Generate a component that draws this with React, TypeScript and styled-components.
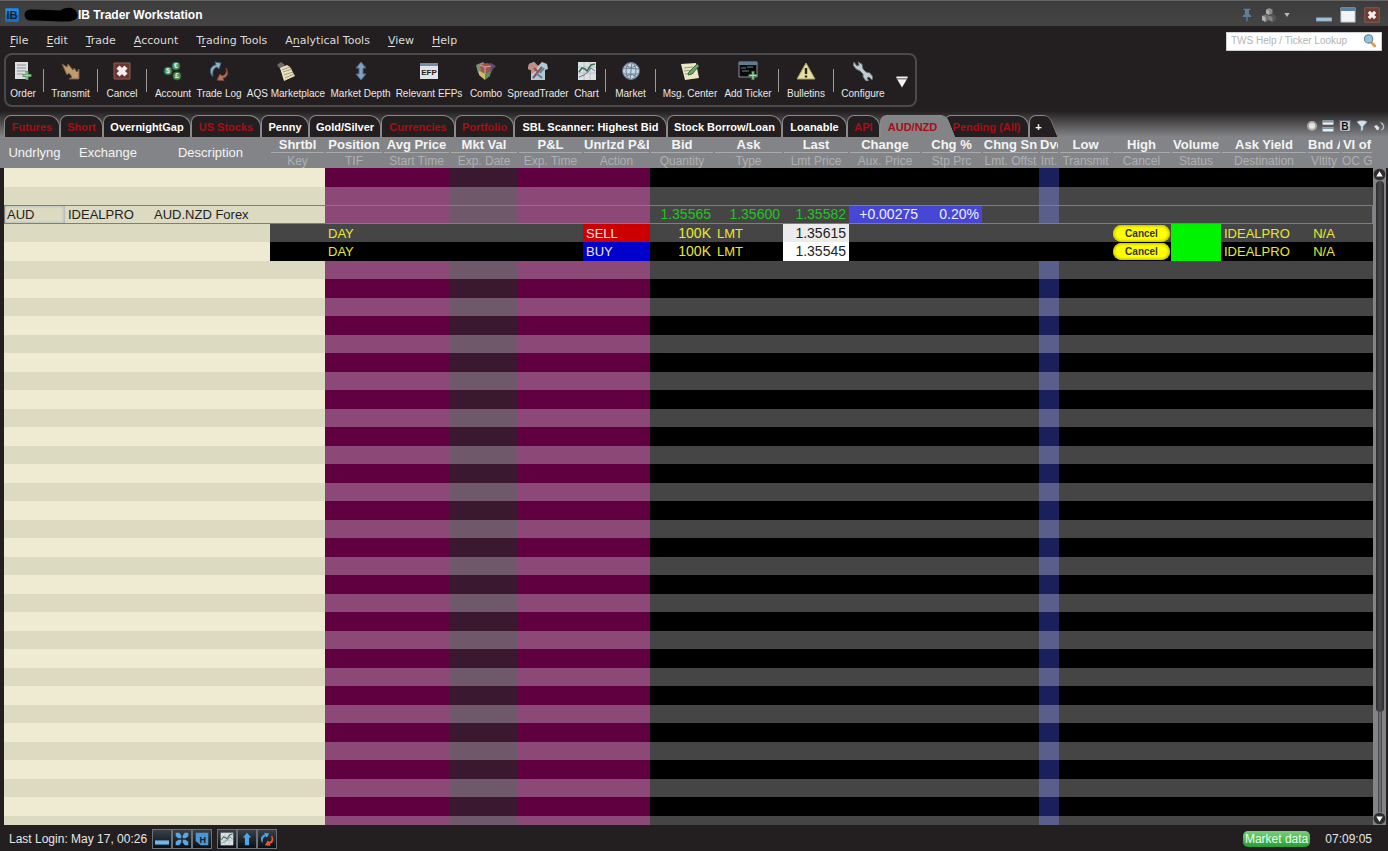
import React from "react";
import styled, { createGlobalStyle, css } from "styled-components";

const GlobalStyle = createGlobalStyle`
  *, *::before, *::after { box-sizing: border-box; }
  body { margin: 0; background: #231f20; font-family: "Liberation Sans", Arial, sans-serif; }
  button { border: 0; padding: 0; background: none; color: inherit; font: inherit; cursor: pointer; }
`;

const Window = styled.div`
  display: flex;
  flex-direction: column;
  height: 100vh;
  overflow: hidden;
  background: #231f20;
  color: #e6e6e6;
`;

/* ---------- title bar ---------- */

const TitleBar = styled.header`
  display: flex;
  align-items: center;
  height: 26px;
  flex: none;
  padding: 2px 8px 0 5px;
  border-top: 1px solid #666;
  background: linear-gradient(#3c3c3c, #454545);
`;

const Title = styled.h1`
  flex: 1;
  margin: 0;
  font-size: 12px;
  line-height: 16px;
  color: #fff;
`;

const WindowControls = styled.div`
  display: flex;
  align-items: center;
  gap: 8px;
`;

const ControlButton = styled.button<{ $gap?: number }>`
  display: flex;
  margin-right: ${(p) => p.$gap ?? 0}px;
`;

/* ---------- menu ---------- */

const MenuRow = styled.div`
  display: flex;
  align-items: center;
  justify-content: space-between;
  flex: none;
  height: 27px;
  padding: 3px 6px 0 10px;
`;

const MenuBar = styled.nav`
  display: flex;
  gap: 18px;
  font: 11px/16px "DejaVu Sans", sans-serif;
  color: #dcdcdc;
`;

const MenuItem = styled.button`
  u { text-underline-offset: 2px; }
`;

const SearchBox = styled.label`
  display: flex;
  align-items: center;
  width: 156px;
  height: 19px;
  padding: 0 4px;
  background: #fff;
  border: 1px solid #cfcfcf;
`;

const SearchInput = styled.input`
  flex: 1;
  min-width: 0;
  border: 0;
  padding: 0;
  outline: 0;
  background: none;
  font: 10px/14px "Liberation Sans", sans-serif;
  color: #444;
  &::placeholder { color: #b4b4b4; opacity: 1; }
`;

/* ---------- toolbar ---------- */

const Toolbar = styled.div`
  display: flex;
  align-self: flex-start;
  flex: none;
  height: 54px;
  margin-left: 4px;
  border: 2px solid #4c494a;
  border-radius: 8px;
`;

const ToolButton = styled.button<{ $width: number }>`
  display: flex;
  flex-direction: column;
  align-items: center;
  gap: 6px;
  width: ${(p) => p.$width}px;
  padding-top: 6px;
  white-space: nowrap;
  font-size: 10px;
  line-height: 14px;
  color: #e8e8e8;
`;

const Separator = styled.div`
  width: 1px;
  height: 23px;
  margin: 14px 3px 0;
  background: #9a9a9a;
`;

const MoreButton = styled.button`
  display: flex;
  align-items: center;
  justify-content: center;
  width: 26px;
  padding-top: 4px;
`;

/* ---------- page tabs ---------- */

const TabRow = styled.div`
  display: flex;
  align-items: flex-end;
  flex: none;
  height: 30px;
  padding: 0 3px 0 4px;
  background: linear-gradient(#231f20 4px, #838487 30px);
`;

const TabList = styled.div`
  display: flex;
  flex: 1;
  height: 22px;
`;

const slanted = css`
  border-right: 0;
  z-index: 1;
  &::after {
    content: "";
    position: absolute;
    top: -1px;
    right: -7px;
    bottom: 0;
    width: 14px;
    background: inherit;
    border-top: 1px solid #8a8a8a;
    border-right: 1px solid #8a8a8a;
    border-top-right-radius: 6px;
    transform: skewX(22deg);
    z-index: -1;
  }
`;

const Tab = styled.button<{ $width: number; $unread?: boolean; $active?: boolean; $slant?: boolean }>`
  position: relative;
  width: ${(p) => p.$width}px;
  border: 1px solid #8a8a8a;
  border-bottom: 0;
  border-radius: 7px 12px 0 0;
  background: ${(p) => (p.$active ? "#838487" : "#231f20")};
  color: ${(p) => (p.$unread ? "#a80e14" : "#fff")};
  font-size: 11px;
  font-weight: bold;
  line-height: 20px;
  text-align: center;
  white-space: nowrap;
  ${(p) => p.$slant && slanted}
`;

const TabTools = styled.div`
  display: flex;
  align-items: center;
  gap: 5px;
  height: 22px;
`;

/* ---------- quote grid ---------- */

const GridArea = styled.main`
  display: flex;
  flex: 1;
  min-height: 0;
  padding: 0 2px 0 4px;
  background: linear-gradient(#838487 31px, #231f20 31px);
`;

const GridScroll = styled.div`
  flex: 1;
  min-width: 0;
  overflow: hidden;
`;

const Grid = styled.table`
  width: 100%;
  table-layout: fixed;
  border-collapse: separate;
  border-spacing: 0;
`;

const HeadCell = styled.th`
  height: 31px;
  padding: 0 1px;
  background: #838487;
  color: #f4f4f4;
  font-size: 13px;
  font-weight: normal;
  line-height: 16px;
  white-space: nowrap;
  overflow: hidden;
`;

const HeadMain = styled.div`
  height: 16px;
  overflow: hidden;
  font-weight: bold;
  border-bottom: 1px solid #a9aaac;
`;

const HeadSub = styled.div`
  height: 15px;
  overflow: hidden;
  line-height: 16px;
  font-size: 12px;
  color: #aeb0b3;
`;

const Row = styled.tr<{ $selected?: boolean }>`
  height: 18px;
  &:nth-child(odd) { height: 19px; }
  ${(p) =>
    p.$selected &&
    css`
      outline: 1px solid #7c7e80;
      outline-offset: -1px;
    `}
`;

const Cell = styled.td<{ $bg: string; $fg?: string; $align?: string; $focus?: boolean }>`
  height: inherit;
  padding: 0 3px;
  overflow: hidden;
  white-space: nowrap;
  font-size: 13px;
  line-height: 17px;
  background: ${(p) => p.$bg};
  color: ${(p) => p.$fg ?? "#222"};
  text-align: ${(p) => p.$align ?? "left"};
  ${(p) => p.$align === "right" && "font-size: 14px;"}
  ${(p) => p.$focus && "box-shadow: inset 0 0 3px 1px #9fb0c0;"}
`;

const ButtonCell = styled(Cell)`
  padding: 0 1px;
`;

const CancelButton = styled.button`
  display: block;
  width: 100%;
  height: 17px;
  border-radius: 9px;
  background: #ffff00;
  box-shadow: inset 0 0 3px 1px #b9b400;
  color: #333;
  font-size: 10px;
  font-weight: bold;
  line-height: 17px;
  text-align: center;
`;

const ScrollBar = styled.div`
  display: flex;
  flex-direction: column;
  align-items: center;
  width: 13px;
  margin-top: 31px;
  background: #838487;
`;

const ScrollButton = styled.button`
  display: flex;
  flex: none;
`;

const ScrollThumb = styled.div`
  flex: 1;
  width: 8px;
  border-radius: 4px;
  background: linear-gradient(90deg, #2c2c2d, #4a4a4c, #2c2c2d);
`;

const ScrollTrack = styled.div`
  flex: none;
  height: 100px;
  width: 4px;
  border: 1px solid #4c4c4e;
  border-width: 0 1px;
  background: #6c6d70;
`;

/* ---------- status bar ---------- */

const StatusBar = styled.footer`
  display: flex;
  align-items: center;
  flex: none;
  height: 26px;
  padding: 2px 16px 0 9px;
  font-size: 12px;
  line-height: 16px;
`;

const StatusGroup = styled.div`
  display: flex;
  margin-left: 5px;
`;

const StatusButton = styled.button`
  display: flex;
  align-items: center;
  justify-content: center;
  width: 20px;
  height: 20px;
  border: 1px solid #68727c;
  background: linear-gradient(#3a4048, #0c0e10);
`;

const MarketData = styled.button`
  height: 16px;
  margin: 0 15px 0 auto;
  padding: 0 2px;
  border-radius: 5px;
  background: linear-gradient(#7ccf7c, #25a032);
  color: #e9ffe9;
  line-height: 16px;
`;

/* ---------- drawings ---------- */

const drawings: Record<string, React.ReactNode> = {
  order: (
    <>
      <path d="M2 1h13v17H2z" fill="#dcdfe2" />
      <path d="M4 4h9M4 7h9M4 10h9M4 13h6" stroke="#8e9499" />
      <path d="M14 10v9M9.500 14.500h9" stroke="#5f9a66" strokeWidth="3" />
      <path d="M14 11v7M10.500 14.500h7" stroke="#a6d3a8" />
    </>
  ),
  transmit: <path d="M1 3l5 3 1-3 5 6 1-2 3 4 2-3v10H8l3-2-3-4-2 2z" fill="#c09a70" stroke="#7b5a42" />,
  cancel: (
    <>
      <path d="M2 2h16v16H2z" fill="#68352f" stroke="#8d5f59" />
      <path d="M6 6l8 8M14 6l-8 8" stroke="#f2eeee" strokeWidth="4.500" />
    </>
  ),
  account: (
    <>
      {[[13, 5, "€"], [5, 10, "$"], [14, 15, "£"]].map(([x, y, s]) => (
        <g key={s}>
          <circle cx={x} cy={y} r="4" fill="#4d8f5e" stroke="#2f6440" />
          <text x={x} y={Number(y) + 2} fontSize="7" fontWeight="bold" fill="#e6f4e8" textAnchor="middle">{s}</text>
        </g>
      ))}
    </>
  ),
  log: (
    <>
      <path d="M3 15C-1 9 3 4 7 4L6 1l6 1-2 6-2-2C5 7 3 10 4 15z" fill="#8db0c6" stroke="#40627a" />
      <path d="M17 7c4 6 0 10-3 10l1 3-7-1 3-6 2 2c4-1 5-4 4-8z" fill="#b5745d" stroke="#7b4434" />
    </>
  ),
  market: (
    <>
      <path d="M1 4l4-3 4 3-4 5z" fill="#6b6a68" />
      <path d="M4 7l7-3 3 2 5 9-11 5z" fill="#e9e0c0" />
      <path d="M6 9l8-3M7 11l9-3M8 14l9-3M9 17l9-4" stroke="#a09876" />
    </>
  ),
  depth: <path d="M10 1l5 6h-3v6h3l-5 6-5-6h3V7H5z" fill="#7fa2be" stroke="#4c6b84" />,
  efp: (
    <>
      <path d="M1 2h18v16H1z" fill="#e2e5e8" />
      <path d="M1 2h18v3H1z" fill="#728da5" />
      <text x="10" y="14" fontSize="8" fontWeight="bold" textAnchor="middle" fill="#222">EFP</text>
    </>
  ),
  combo: (
    <>
      <path d="M0 4l7-3 3 3-1 14-7-6z" fill="#7d9270" />
      <path d="M9 3l6-1 5 3-3 3-2 4-6 6z" fill="#5c4a78" />
      <path d="M4 4l7-2 4 3-1 6-5 2-4-3z" fill="#a3524d" />
      <path d="M3 10l6 3v6l-6-5z" fill="#d0bc62" />
      <path d="M9 13l6-3-1 5-5 4z" fill="#5c8f59" />
      <path d="M4 4l5 2 6-1M9 6v7" stroke="#dca49c" fill="none" />
    </>
  ),
  spread: (
    <>
      <path d="M1 3l5-2 4 4 4-4 5 2 1 5-3 1v10H3V9L0 8z" fill="#b4c9d6" />
      <path d="M1 3l5-2 4 4-2 5-5 3V9L0 8z" fill="#c58c86" />
      <path d="M5 17l9-11M6 7l3 3" stroke="#94504a" strokeWidth="2" />
      <path d="M8 12l6 5M12 12l4-5" stroke="#5b7f9a" strokeWidth="2" />
    </>
  ),
  chart: (
    <>
      <path d="M1 1h18v18H1z" fill="#dce1e4" />
      <path d="M1 6h18M1 12h18M7 1v18M13 1v18" stroke="#b8c2c8" />
      <path d="M2 11l3-4 3 1 2 2 4-6 4-1" stroke="#35724a" strokeWidth="1.500" fill="none" />
      <path d="M2 16l5-2 4-3 3-4 4 3" stroke="#657b96" fill="none" />
    </>
  ),
  globe: (
    <>
      <circle cx="10" cy="10" r="8.500" fill="#c9d6e2" stroke="#53687c" />
      <path d="M2 7l16 1M2 13h16M11 1L9 19M4 4c4 3 8 3 12 0M4 16c4-3 8-3 12 0" stroke="#6a7f93" fill="none" />
      <ellipse cx="10" cy="10" rx="5" ry="8.500" stroke="#6a7f93" fill="none" />
    </>
  ),
  message: (
    <>
      <path d="M1 3l15-1 3 15-14 2z" fill="#ece7c6" />
      <path d="M4 7l9-1M4 10l9-1M5 13l9-1" stroke="#9b987e" />
      <path d="M8 14l1-3 8-8 2 2-7 8z" fill="#6ea365" stroke="#3e6a3c" />
    </>
  ),
  ticker: (
    <>
      <path d="M1 1h18v15H1z" fill="#080a0b" stroke="#88949c" />
      <path d="M1 1h18v3H1z" fill="#617b90" />
      <path d="M3 7h5M9 6h6M4 10h7" stroke="#69857b" />
      <path d="M15 10v9M10.500 14.500h9" stroke="#4e8455" strokeWidth="3" />
      <path d="M15 11v7M11.500 14.500h7" stroke="#b5deb6" />
    </>
  ),
  bulletin: (
    <>
      <path d="M10 2l9 16H1z" fill="#e6dfa0" stroke="#a79f67" strokeLinejoin="round" />
      <path d="M10 7v6M10 14.500v2" stroke="#28261c" strokeWidth="2.400" />
    </>
  ),
  wrench: (
    <path
      d="M5 1l4 2 1 5 3 3 4 1 3 4-1 3-3-3-2 1 2 3h-3l-3-4v-3L7 10 3 8 0 4l1-3 3 4 2-1z"
      fill="#c2cad2"
      stroke="#5d666f"
    />
  ),
  more: <path d="M2 2h16v3H2zM3 6h14l-7 12z" fill="#f0f0f0" />,
  ib: (
    <>
      <rect x="0" y="0" width="20" height="20" rx="2" fill="#1671c0" />
      <path d="M1 1h18v8H1z" fill="#2f8ad6" />
      <text x="10" y="16" fontSize="16" fontWeight="bold" textAnchor="middle" fill="#0a2034">IB</text>
    </>
  ),
  pin: <path d="M5 1h10v2h-2v6l3 2v2h-5v6H9v-6H4v-2l3-2V3H5z" fill="#5c7f9c" />,
  cubes: (
    <>
      <path d="M6 2l4-2 5 2v6l-5 2-4-2z" fill="#8b8b8b" />
      <path d="M0 11l5-2 5 2v6l-5 3-5-3z" fill="#747474" />
      <path d="M10 11l5-2 5 2v6l-5 3-5-3z" fill="#555" />
      <path d="M6 2l4 2v6l-4-2zM0 11l5 2v7l-5-3z" fill="#b4b4b4" />
      <path d="M10 11l5 2v7l-5-3z" fill="#858585" />
    </>
  ),
  down: <path d="M1 3h18l-9 14z" fill="#b9b9b9" />,
  minimize: <path d="M0 13h20v5H0z" fill="#9fc0d6" stroke="#53748b" />,
  maximize: (
    <>
      <path d="M1 1h18v18H1z" fill="#f1f3f5" stroke="#9aa5ae" />
      <path d="M1 1h18v4H1z" fill="#5a82a0" />
    </>
  ),
  close: (
    <>
      <path d="M1 1h18v18H1z" fill="#6d3a30" stroke="#95655a" />
      <path d="M6 6l8 8M14 6l-8 8" stroke="#f2eeee" strokeWidth="4" />
    </>
  ),
  search: (
    <>
      <path d="M12 12l5 5" stroke="#e39a4e" strokeWidth="4" strokeLinecap="round" />
      <circle cx="8" cy="7" r="6" fill="#8fc4e3" stroke="#6a7f8e" strokeWidth="1.500" />
    </>
  ),
  dot: <circle cx="10" cy="10" r="8" fill="#e5e5e5" stroke="#a8a8a8" strokeWidth="4" />,
  rows: (
    <>
      <path d="M1 1h18v7H1zM1 12h18v7H1z" fill="#e9eef2" />
      <path d="M1 1h18v3H1zM1 12h18v3H1z" fill="#7c97a8" />
    </>
  ),
  bold: (
    <>
      <path d="M1 1h18v18H1z" fill="#c9d0d6" stroke="#5d6a74" strokeWidth="2" />
      <text x="10" y="16" fontSize="17" fontWeight="bold" textAnchor="middle" fill="#111">B</text>
    </>
  ),
  funnel: <path d="M1 3c5-3 13-3 18 0l-7 8v6l-4 2v-8z" fill="#d5e2eb" stroke="#5b7385" />,
  tools: (
    <>
      <path d="M11 3l5 1 3 5v6l-4 3-4-4 4 1 1-5z" fill="#b9c6cf" stroke="#4f5a62" />
      <path d="M1 10l5-2 5 5-2 5-3-1z" fill="#e1e8ed" stroke="#4f5a62" />
    </>
  ),
  horizontal: (
    <>
      <path d="M1 1h18v18H8L1 13z" fill="#4b97d3" />
      <text x="11" y="15" fontSize="13" fontWeight="bold" textAnchor="middle" fill="#0b2136">H</text>
    </>
  ),
  bar: <path d="M0 12h20v6H0z" fill="#6db8ec" />,
  shrink: <path d="M1 1h5l3 4v4H5L1 6zM19 1h-5l-3 4v4h4l4-3zM1 19h5l3-4v-4H5l-4 3zM19 19h-5l-3-4v-4h4l4 3z" fill="#5ba6e6" />,
  up: <path d="M10 1l6 7h-3v11H7V8H4z" fill="#4fa5e8" />,
  swap: (
    <>
      <path d="M3 15C-1 9 3 4 7 4L6 1l7 1-3 6-2-2C5 7 3 10 4 15z" fill="#4aa7e8" />
      <path d="M17 5c5 7 0 12-3 12l1 3-8-1 4-7 2 2c4-1 4-4 3-8z" fill="#e9582b" />
    </>
  ),
  scrollUp: (
    <>
      <circle cx="10" cy="10" r="9" fill="#2e2e30" />
      <path d="M10 5l5 8H5z" fill="#fff" />
    </>
  ),
  scrollDown: (
    <>
      <circle cx="10" cy="10" r="9" fill="#2e2e30" />
      <path d="M10 15l5-8H5z" fill="#fff" />
    </>
  ),
};

const Icon = ({ name, size = 20 }: { name: string; size?: number }) => (
  <svg width={size} height={size} viewBox="0 0 20 20" aria-hidden="true">
    {drawings[name]}
  </svg>
);

const Redaction = () => (
  <svg width="59" height="18" viewBox="0 0 59 18" aria-hidden="true">
    <path d="M11 9C22 9 36 10 50 10M46 8c3-1 6-1 7 1" stroke="#000" strokeWidth="11" strokeLinecap="round" fill="none" />
  </svg>
);

/* ---------- data ---------- */

const menus: [string, string, string][] = [
  ["", "F", "ile"],
  ["", "E", "dit"],
  ["", "T", "rade"],
  ["", "A", "ccount"],
  ["T", "r", "ading Tools"],
  ["A", "n", "alytical Tools"],
  ["", "V", "iew"],
  ["", "H", "elp"],
];

const tools: ([string, string, number] | null)[] = [
  ["Order", "order", 34],
  null,
  ["Transmit", "transmit", 47],
  null,
  ["Cancel", "cancel", 42],
  null,
  ["Account", "account", 46],
  ["Trade Log", "log", 46],
  ["AQS Marketplace", "market", 88],
  ["Market Depth", "depth", 61],
  ["Relevant EFPs", "efp", 76],
  ["Combo", "combo", 38],
  ["SpreadTrader", "spread", 66],
  ["Chart", "chart", 31],
  null,
  ["Market", "globe", 43],
  null,
  ["Msg. Center", "message", 62],
  ["Add Ticker", "ticker", 54],
  null,
  ["Bulletins", "bulletin", 48],
  null,
  ["Configure", "wrench", 52],
];

const tabs: { name: string; width: number; unread?: boolean; active?: boolean; slant?: boolean }[] = [
  { name: "Futures", width: 56, unread: true },
  { name: "Short", width: 43, unread: true },
  { name: "OvernightGap", width: 88 },
  { name: "US Stocks", width: 70, unread: true },
  { name: "Penny", width: 48 },
  { name: "Gold/Silver", width: 72 },
  { name: "Currencies", width: 74, unread: true },
  { name: "Portfolio", width: 59, unread: true },
  { name: "SBL Scanner: Highest Bid", width: 153 },
  { name: "Stock Borrow/Loan", width: 115 },
  { name: "Loanable", width: 65 },
  { name: "API", width: 33, unread: true },
  { name: "AUD/NZD", width: 64, unread: true, active: true, slant: true },
  { name: "Pending (All)", width: 85, unread: true },
  { name: "+", width: 18, slant: true },
];

type Tone = "cream" | "plum" | "mauve" | "navy" | "plain";

const columns: [number, string, string, Tone][] = [
  [61, "", "Undrlyng", "cream"],
  [86, "", "Exchange", "cream"],
  [119, "", "Description", "cream"],
  [55, "Shrtbl", "Key", "cream"],
  [58, "Position", "TIF", "plum"],
  [67, "Avg Price", "Start Time", "plum"],
  [68, "Mkt Val", "Exp. Date", "mauve"],
  [65, "P&L", "Exp. Time", "plum"],
  [67, "Unrlzd P&L", "Action", "plum"],
  [64, "Bid", "Quantity", "plain"],
  [69, "Ask", "Type", "plain"],
  [66, "Last", "Lmt Price", "plain"],
  [72, "Change", "Aux. Price", "plain"],
  [61, "Chg %", "Stp Prc", "plain"],
  [57, "Chng Sn", "Lmt. Offst", "plain"],
  [20, "Dvd", "Int.", "navy"],
  [53, "Low", "Transmit", "plain"],
  [59, "High", "Cancel", "plain"],
  [50, "Volume", "Status", "plain"],
  [86, "Ask Yield", "Destination", "plain"],
  [34, "Bnd Ask", "Vltlty", "plain"],
  [32, "VI of", "OC Gr", "plain"],
];

/* dark and light shade of every column tone */
const shades: Record<Tone, [string, string]> = {
  cream: ["#eeebd2", "#dcdac1"],
  plum: ["#600040", "#8c4877"],
  mauve: ["#3a1930", "#6e5869"],
  navy: ["#1a205c", "#595e8a"],
  plain: ["#000000", "#454545"],
};

interface CellData {
  text?: string;
  fg?: string;
  bg?: string;
  align?: string;
  button?: boolean;
  focus?: boolean;
}

const green = "#22c422";
const yellow = "#e9e92c";

const quote: Record<number, CellData> = {
  0: { text: "AUD", focus: true },
  1: { text: "IDEALPRO" },
  2: { text: "AUD.NZD Forex" },
  9: { text: "1.35565", fg: green, align: "right" },
  10: { text: "1.35600", fg: green, align: "right" },
  11: { text: "1.35582", fg: green, align: "right" },
  12: { text: "+0.00275", fg: "#eeeeff", bg: "#4747d6", align: "right" },
  13: { text: "0.20%", fg: "#eeeeff", bg: "#4747d6", align: "right" },
};

const order = (side: string, sideColor: string, price: string, priceBg: string): Record<number, CellData> => ({
  4: { text: "DAY", fg: yellow },
  8: { text: side, fg: "#f4e6e6", bg: sideColor },
  9: { text: "100K", fg: yellow, align: "right" },
  10: { text: "LMT", fg: yellow },
  11: { text: price, fg: "#222", bg: priceBg, align: "right" },
  17: { button: true },
  18: { bg: "#00f400" },
  19: { text: "IDEALPRO", fg: yellow },
  20: { text: "N/A", fg: yellow, align: "center" },
});

const special: Record<number, { cells: Record<number, CellData>; order?: boolean }> = {
  2: { cells: quote },
  3: { cells: order("SELL", "#cc0000", "1.35615", "#ebebeb"), order: true },
  4: { cells: order("BUY", "#0000cc", "1.35545", "#ffffff"), order: true },
};

const ROWS = 60;
const isLight = (row: number) => row === 2 || row % 2 === 1;

const GridRow = ({ index }: { index: number }) => {
  const data = special[index];
  const shade = isLight(index) ? 1 : 0;
  return (
    <Row $selected={index === 2}>
      {columns.map(([, , , tone], i) => {
        const cell = data?.cells[i] ?? {};
        const base = data?.order && i > 2 && tone !== "navy" ? "plain" : tone;
        const bg = cell.bg ?? shades[data?.order && tone === "navy" ? "plain" : base][shade];
        return cell.button ? (
          <ButtonCell key={i} $bg={bg}>
            <CancelButton>Cancel</CancelButton>
          </ButtonCell>
        ) : (
          <Cell key={i} $bg={bg} $fg={cell.fg} $align={cell.align} $focus={cell.focus}>
            {cell.text}
          </Cell>
        );
      })}
    </Row>
  );
};

export default function App() {
  return (
    <Window>
      <GlobalStyle />
      <TitleBar>
        <Icon name="ib" size={14} />
        <Redaction />
        <Title>IB Trader Workstation</Title>
        <WindowControls>
          <ControlButton aria-label="Pin"><Icon name="pin" size={14} /></ControlButton>
          <ControlButton aria-label="Layouts"><Icon name="cubes" size={14} /></ControlButton>
          <ControlButton aria-label="Layout list" $gap={18}><Icon name="down" size={6} /></ControlButton>
          <ControlButton aria-label="Minimize"><Icon name="minimize" size={16} /></ControlButton>
          <ControlButton aria-label="Maximize"><Icon name="maximize" size={16} /></ControlButton>
          <ControlButton aria-label="Close"><Icon name="close" size={16} /></ControlButton>
        </WindowControls>
      </TitleBar>

      <MenuRow>
        <MenuBar>
          {menus.map(([before, key, after]) => (
            <MenuItem key={key + after}>{before}<u>{key}</u>{after}</MenuItem>
          ))}
        </MenuBar>
        <SearchBox>
          <SearchInput aria-label="Help search" placeholder="TWS Help / Ticker Lookup" />
          <Icon name="search" size={14} />
        </SearchBox>
      </MenuRow>

      <Toolbar>
        {tools.map((tool, i) =>
          tool ? (
            <ToolButton key={i} $width={tool[2]}>
              <Icon name={tool[1]} />
              {tool[0]}
            </ToolButton>
          ) : (
            <Separator key={i} />
          )
        )}
        <MoreButton aria-label="More tools"><Icon name="more" size={14} /></MoreButton>
      </Toolbar>

      <TabRow>
        <TabList>
          {tabs.map((t) => (
            <Tab key={t.name} $width={t.width} $unread={t.unread} $active={t.active} $slant={t.slant}>
              {t.name}
            </Tab>
          ))}
        </TabList>
        <TabTools>
          <ControlButton aria-label="Indicator"><Icon name="dot" size={10} /></ControlButton>
          <ControlButton aria-label="Rows"><Icon name="rows" size={12} /></ControlButton>
          <ControlButton aria-label="Bold"><Icon name="bold" size={12} /></ControlButton>
          <ControlButton aria-label="Filter"><Icon name="funnel" size={12} /></ControlButton>
          <ControlButton aria-label="Settings"><Icon name="tools" size={12} /></ControlButton>
        </TabTools>
      </TabRow>

      <GridArea>
        <GridScroll>
          <Grid>
            <colgroup>
              {columns.map(([width], i) => (
                <col key={i} width={width} />
              ))}
            </colgroup>
            <thead>
              <tr>
                {columns.map(([, main, sub], i) => (
                  <HeadCell key={i}>
                    {main ? (
                      <>
                        <HeadMain>{main}</HeadMain>
                        <HeadSub>{sub}</HeadSub>
                      </>
                    ) : (
                      sub
                    )}
                  </HeadCell>
                ))}
              </tr>
            </thead>
            <tbody>
              {Array.from({ length: ROWS }, (_, i) => (
                <GridRow key={i} index={i} />
              ))}
            </tbody>
          </Grid>
        </GridScroll>
        <ScrollBar>
          <ScrollButton aria-label="Scroll up"><Icon name="scrollUp" size={13} /></ScrollButton>
          <ScrollThumb />
          <ScrollTrack />
          <ScrollButton aria-label="Scroll down"><Icon name="scrollDown" size={13} /></ScrollButton>
        </ScrollBar>
      </GridArea>

      <StatusBar>
        Last Login: May 17, 00:26
        <StatusGroup>
          <StatusButton aria-label="Minimize all"><Icon name="bar" size={14} /></StatusButton>
          <StatusButton aria-label="Shrink"><Icon name="shrink" size={14} /></StatusButton>
          <StatusButton aria-label="Hide"><Icon name="horizontal" size={14} /></StatusButton>
        </StatusGroup>
        <StatusGroup>
          <StatusButton aria-label="Chart"><Icon name="chart" size={14} /></StatusButton>
          <StatusButton aria-label="Market depth"><Icon name="up" size={14} /></StatusButton>
          <StatusButton aria-label="Trade log"><Icon name="swap" size={14} /></StatusButton>
        </StatusGroup>
        <MarketData>Market data</MarketData>
        <time>07:09:05</time>
      </StatusBar>
    </Window>
  );
}
